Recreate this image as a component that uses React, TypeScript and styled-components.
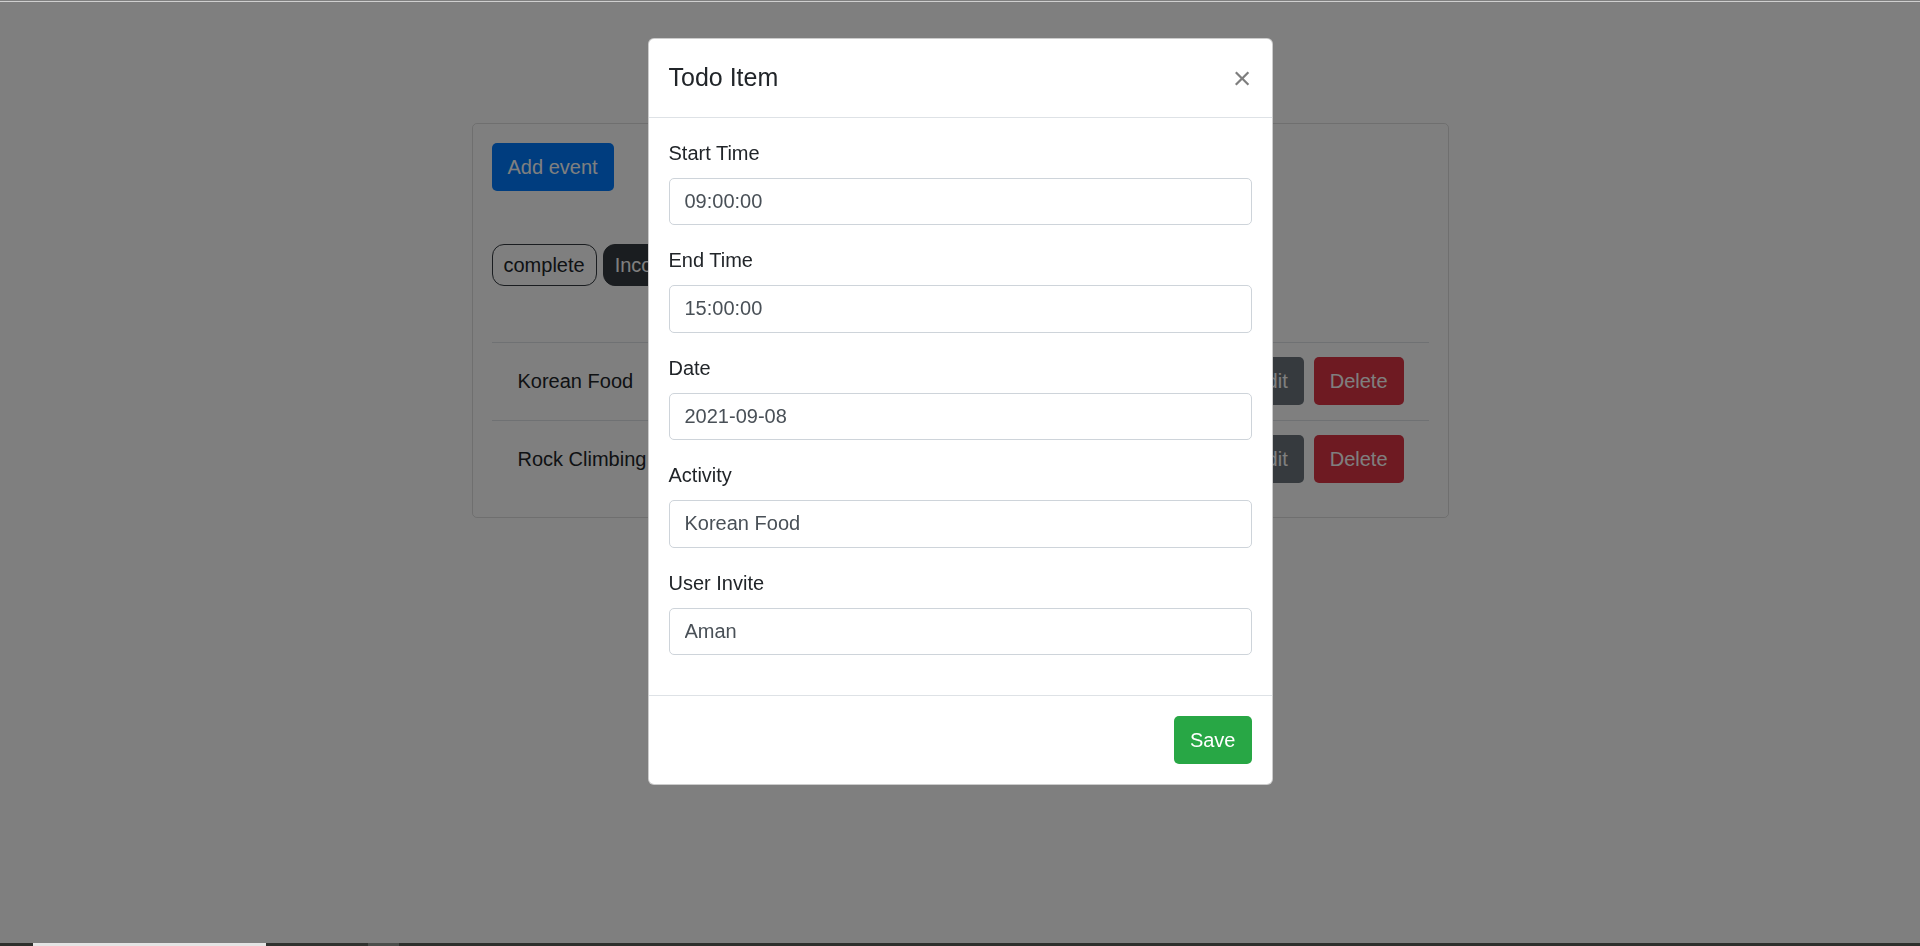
import React from 'react';
import styled, { createGlobalStyle } from 'styled-components';

const GlobalStyle = createGlobalStyle`
    html, body {
        margin: 0;
        padding: 0;
        background: #fff;
    }
    body {
        font-family: "Liberation Sans", Arial, sans-serif;
        font-size: 20px;
        line-height: 1.5;
        color: #212529;
        overflow: hidden;
    }
    * {
        box-sizing: border-box;
    }
`;

const Page = styled.div`
    height: 946px;
    padding-top: 123px;
`;

const Card = styled.div`
    width: 977px;
    margin: 0 auto;
    border: 1px solid rgba(0, 0, 0, 0.125);
    border-radius: 5px;
    padding: 19px;
`;

const Button = styled.button<{ $variant: 'primary' | 'secondary' | 'danger' | 'success' }>`
    display: inline-flex;
    align-items: center;
    justify-content: center;
    height: 48px;
    padding: 0 15px;
    border: 1px solid transparent;
    border-radius: 5px;
    font-family: inherit;
    font-size: 20px;
    line-height: 30px;
    color: #fff;
    background: ${p => ({
        primary: '#007bff',
        secondary: '#6c757d',
        danger: '#dc3545',
        success: '#28a745',
    })[p.$variant]};
`;

const FilterRow = styled.div`
    display: flex;
    gap: 6px;
    margin-top: 53px;
`;

const Pill = styled.button<{ $active?: boolean }>`
    height: 42px;
    padding: 0 11px;
    border: 1px solid #343a40;
    border-radius: 12px;
    font-family: inherit;
    font-size: 20px;
    line-height: 30px;
    color: ${p => (p.$active ? '#fff' : '#212529')};
    background: ${p => (p.$active ? '#343a40' : 'transparent')};
`;

const EventList = styled.div`
    margin-top: 56px;
`;

const EventRow = styled.div`
    display: flex;
    align-items: center;
    border-top: 1px solid #dee2e6;
    padding: 14px 25px 15px 26px;
`;

const EventName = styled.span`
    flex: 1;
`;

const RowActions = styled.div`
    display: flex;
    gap: 10px;
`;

const Backdrop = styled.div`
    position: fixed;
    inset: 0;
    background: rgba(0, 0, 0, 0.5);
`;

const ModalWrap = styled.div`
    position: fixed;
    inset: 0;
    display: flex;
    justify-content: center;
    align-items: flex-start;
    padding-top: 38px;
`;

const Modal = styled.div`
    width: 625px;
    background: #fff;
    border: 1px solid rgba(0, 0, 0, 0.2);
    border-radius: 6px;
`;

const ModalHeader = styled.div`
    display: flex;
    align-items: flex-start;
    padding: 20px;
    border-bottom: 1px solid #dee2e6;
`;

const ModalTitle = styled.h5`
    margin: 0;
    font-size: 25px;
    font-weight: 400;
    line-height: 37.5px;
`;

const CloseButton = styled.button`
    margin: -17px -20px -20px auto;
    padding: 20px;
    border: 0;
    background: transparent;
    font-family: inherit;
    font-size: 32px;
    font-weight: 400;
    line-height: 1;
    color: #000;
    opacity: 0.5;
`;

const ModalBody = styled.div`
    padding: 20px;
`;

const FormGroup = styled.div`
    margin-bottom: 20px;
`;

const Label = styled.label`
    display: block;
    margin-bottom: 10px;
    line-height: 30px;
`;

const Input = styled.input`
    display: block;
    width: 100%;
    height: 47.5px;
    padding: 7.5px 15px;
    border: 1px solid #ced4da;
    border-radius: 5px;
    font-family: inherit;
    font-size: 20px;
    line-height: 30px;
    color: #495057;
    background: #fff;
`;

const ModalFooter = styled.div`
    display: flex;
    justify-content: flex-end;
    padding: 15px;
    border-top: 1px solid #dee2e6;

    & > * {
        margin: 5px;
    }
`;

const TopEdge = styled.div`
    position: fixed;
    top: 1px;
    left: 0;
    right: 0;
    height: 1px;
    background: #cfcfcf;
`;

const Taskbar = styled.div`
    position: fixed;
    left: 0;
    right: 0;
    bottom: 0;
    height: 3px;
    display: flex;
    background: #2d2f2c;
`;

const TaskSlot = styled.div<{ $w: number; $c: string }>`
    width: ${p => p.$w}px;
    background: ${p => p.$c};
`;

const fields = [
    { label: 'Start Time', value: '09:00:00' },
    { label: 'End Time', value: '15:00:00' },
    { label: 'Date', value: '2021-09-08' },
    { label: 'Activity', value: 'Korean Food' },
    { label: 'User Invite', value: 'Aman' },
];

const events = ['Korean Food', 'Rock Climbing'];

export default function App() {
    return (
        <>
            <GlobalStyle />
            <Page>
                <Card>
                    <Button $variant="primary">Add event</Button>
                    <FilterRow>
                        <Pill>complete</Pill>
                        <Pill $active>Incomplete</Pill>
                    </FilterRow>
                    <EventList>
                        {events.map(name => (
                            <EventRow key={name}>
                                <EventName>{name}</EventName>
                                <RowActions>
                                    <Button $variant="secondary">Edit</Button>
                                    <Button $variant="danger">Delete</Button>
                                </RowActions>
                            </EventRow>
                        ))}
                    </EventList>
                </Card>
            </Page>
            <Backdrop />
            <ModalWrap>
                <Modal>
                    <ModalHeader>
                        <ModalTitle>Todo Item</ModalTitle>
                        <CloseButton>×</CloseButton>
                    </ModalHeader>
                    <ModalBody>
                        {fields.map(f => (
                            <FormGroup key={f.label}>
                                <Label>{f.label}</Label>
                                <Input defaultValue={f.value} />
                            </FormGroup>
                        ))}
                    </ModalBody>
                    <ModalFooter>
                        <Button $variant="success">Save</Button>
                    </ModalFooter>
                </Modal>
            </ModalWrap>
            <TopEdge />
            <Taskbar>
                <TaskSlot $w={33} $c="#2d2f2c" />
                <TaskSlot $w={233} $c="#e4e4e4" />
                <TaskSlot $w={102} $c="#30322f" />
                <TaskSlot $w={31} $c="#4b4e4b" />
            </Taskbar>
        </>
    );
}
